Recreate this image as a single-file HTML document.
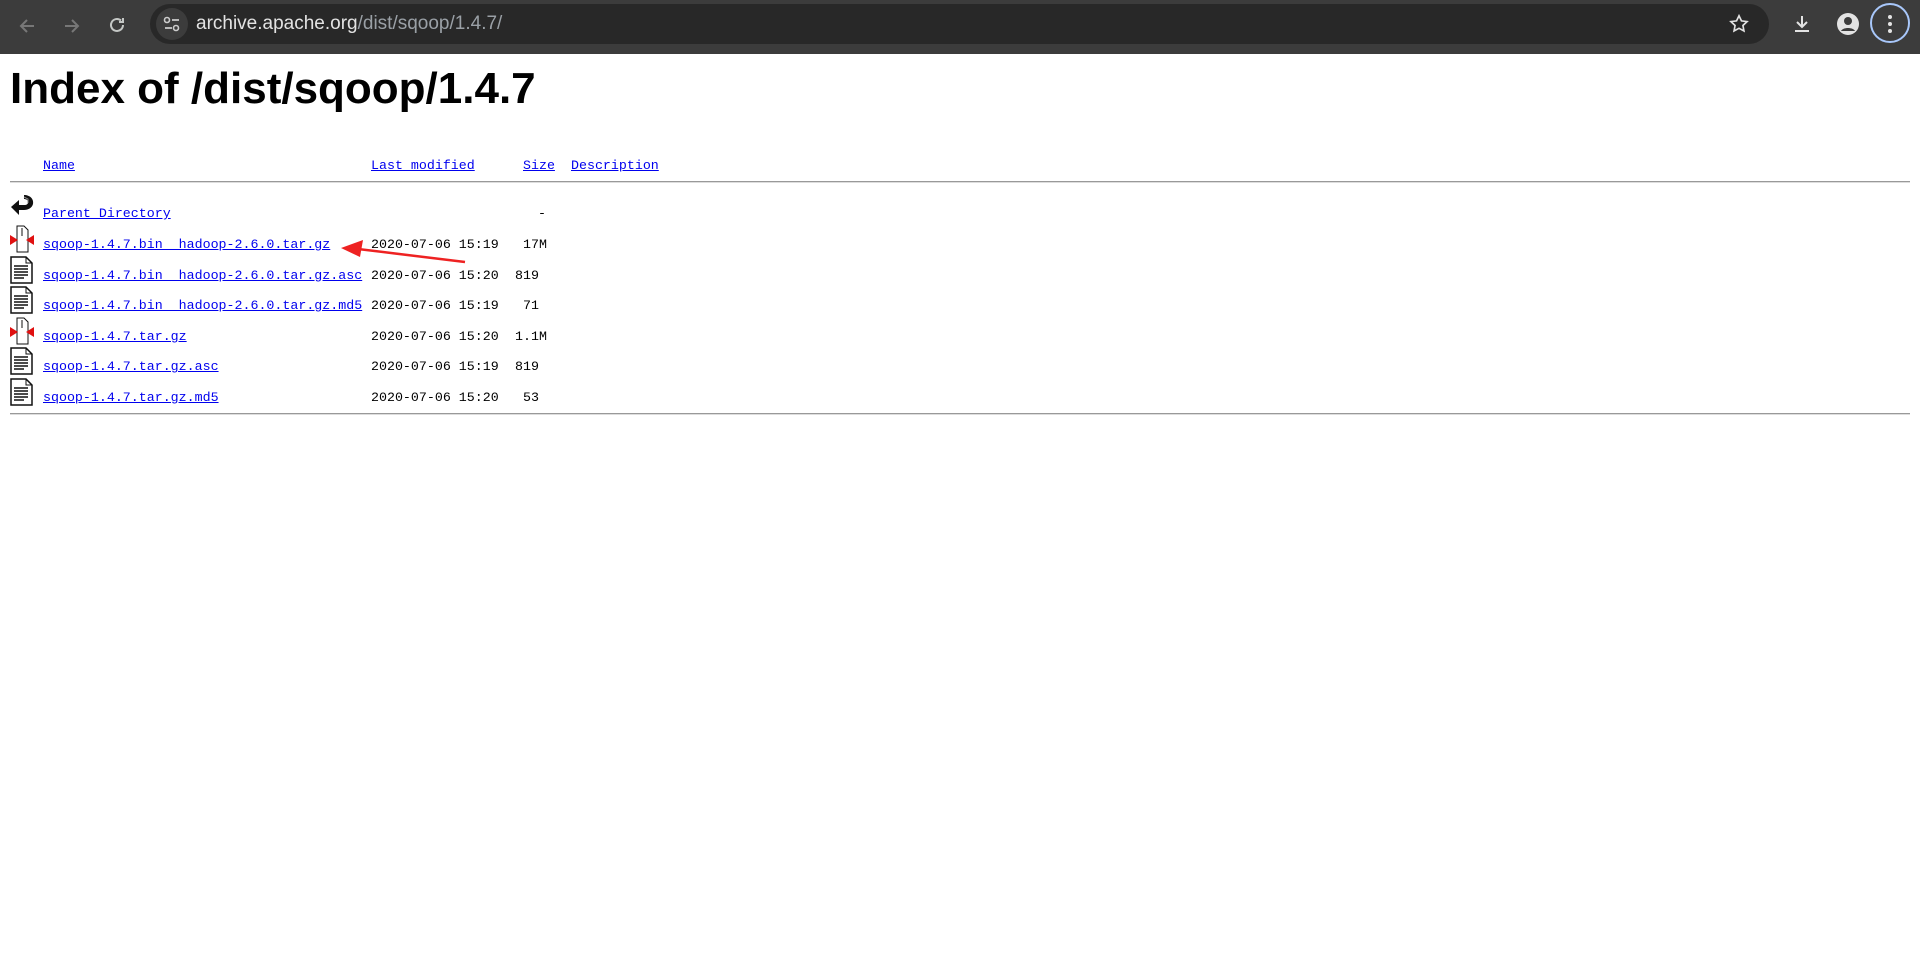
<!DOCTYPE html>
<html><head><meta charset="utf-8"><style>
body{margin:0;width:1920px;height:965px;background:#fff;overflow:hidden;font-family:"Liberation Sans",sans-serif;position:relative}
.bar{position:absolute;left:0;top:0;width:1920px;height:54px;background:#3c3c3c}
.url{position:absolute;left:150px;top:4px;width:1619px;height:40px;border-radius:20px;background:#282828}
.url .u{position:absolute;left:46px;top:9px;color:#e3e3e3;font-size:19px;white-space:pre}
.url .d{color:#9aa0a6}
.ic{position:absolute;color:#c4c7c5}
h1{position:absolute;left:10px;top:64px;margin:0;font-size:44px;font-weight:bold;letter-spacing:0px}
.t{position:absolute;font-family:"Liberation Mono",monospace;font-size:13.3px;color:#000;white-space:pre}
a{color:#0000ee;text-decoration:underline}
.hr{position:absolute;left:10px;width:1900px;height:1px;background:#999;border-bottom:1px solid #ddd}
</style></head><body>
<div class="bar">
<svg class="ic" style="left:16px;top:15px" width="22" height="22" viewBox="0 0 22 22"><path d="M18 11H5M11 5l-6 6 6 6" stroke="#777" stroke-width="2" fill="none"/></svg>
<svg class="ic" style="left:61px;top:15px" width="22" height="22" viewBox="0 0 22 22"><path d="M4 11h13M11 5l6 6-6 6" stroke="#777" stroke-width="2" fill="none"/></svg>
<svg class="ic" style="left:106px;top:14px" width="22" height="22" viewBox="0 0 22 22"><path d="M17 11a6 6 0 1 1-2-4.5M17 4v4h-4" stroke="#c4c7c5" stroke-width="2" fill="none"/></svg>
<div class="url"><div style="position:absolute;left:6px;top:4px;width:32px;height:32px;border-radius:16px;background:#3c3c3c"></div>
<svg style="position:absolute;left:13px;top:12px" width="18" height="16" viewBox="0 0 18 16"><circle cx="4" cy="4" r="2.5" stroke="#ccc" stroke-width="1.6" fill="none"/><path d="M9 4h7M2 12h7" stroke="#ccc" stroke-width="1.8"/><circle cx="13" cy="12" r="2.5" stroke="#ccc" stroke-width="1.6" fill="none"/></svg>
<div class="u">archive.apache.org<span class="d">/dist/sqoop/1.4.7/</span></div>
<svg style="position:absolute;left:1578px;top:9px" width="22" height="22" viewBox="0 0 24 24"><path d="M12 3l2.7 5.6 6.1.8-4.5 4.2 1.1 6L12 16.7 6.6 19.6l1.1-6L3.2 9.4l6.1-.8z" stroke="#e3e3e3" stroke-width="1.8" fill="none"/></svg></div>
<svg class="ic" style="left:1791px;top:13px" width="22" height="22" viewBox="0 0 22 22"><path d="M11 3v11M6 9l5 5 5-5M4 18h14" stroke="#e3e3e3" stroke-width="2" fill="none"/></svg>
<svg class="ic" style="left:1836px;top:12px" width="24" height="24" viewBox="0 0 24 24"><circle cx="12" cy="12" r="11" fill="#e3e3e3"/><circle cx="12" cy="9" r="4" fill="#3c3c3c"/><path d="M5 19c2-4 12-4 14 0" fill="#3c3c3c"/></svg>
<div style="position:absolute;left:1870px;top:3px;width:40px;height:40px;border-radius:22px;border:2px solid #a8c7fa;box-sizing:border-box"></div>
<svg class="ic" style="left:1886px;top:13px" width="8" height="22" viewBox="0 0 8 22"><circle cx="4" cy="4" r="2" fill="#e3e3e3"/><circle cx="4" cy="11" r="2" fill="#e3e3e3"/><circle cx="4" cy="18" r="2" fill="#e3e3e3"/></svg>
</div>
<h1>Index of /dist/sqoop/1.4.7</h1>
<div class="t" style="left:43px;top:158px"><a>Name</a></div>
<div class="t" style="left:371px;top:158px"><a>Last modified</a></div>
<div class="t" style="left:523px;top:158px"><a>Size</a></div>
<div class="t" style="left:571px;top:158px"><a>Description</a></div>
<div class="hr" style="top:181px"></div>
<svg style="position:absolute;left:10px;top:193px" width="26" height="26" viewBox="0 0 26 26"><path d="M14 2c6 0 10 4 9 9-1 4-5 6-9 6H9v5L1 14l8-7v5h5c3 0 4-1 4-3s-2-3-4-3z" fill="#111"/><path d="M14 4l4 2v4" stroke="#888" fill="none"/></svg>
<div class="t" style="left:43px;top:206px"><a>Parent Directory</a></div><div class="t" style="left:538px;top:206px">-</div>
<div id="rows"></div>
<svg style="position:absolute;left:0;top:0" width="1920" height="965"><path d="M465 262 L358 249" stroke="#ee2222" stroke-width="2.5"/><path d="M341 248 L363 240 L360 257z" fill="#ee2222"/></svg>
<div class="hr" style="top:413px"></div>
<script>
var r=[["sqoop-1.4.7.bin__hadoop-2.6.0.tar.gz","15:19"," 17M",1],["sqoop-1.4.7.bin__hadoop-2.6.0.tar.gz.asc","15:20","819",0],["sqoop-1.4.7.bin__hadoop-2.6.0.tar.gz.md5","15:19"," 71",0],["sqoop-1.4.7.tar.gz","15:20","1.1M",1],["sqoop-1.4.7.tar.gz.asc","15:19","819",0],["sqoop-1.4.7.tar.gz.md5","15:20"," 53",0]];
var h="";
r.forEach(function(x,i){var y=237+i*30.6;
var ic=x[3]?'<svg style="position:absolute;left:10px;top:'+(y-12)+'px" width="24" height="28" viewBox="0 0 24 28"><path d="M7 1h7l4 4v22H7z" fill="#fff" stroke="#111"/><path d="M0 10l8 5-8 5zM24 10l-8 5 8 5z" fill="#e01010"/><path d="M12 3v8" stroke="#111"/></svg>':'<svg style="position:absolute;left:10px;top:'+(y-12)+'px" width="24" height="28" viewBox="0 0 24 28"><path d="M1 1h15l6 6v20H1z" fill="#fff" stroke="#111" stroke-width="1.5"/><path d="M16 1v6h6" fill="none" stroke="#111"/><path d="M4 10h14M4 13h14M4 16h14M4 19h14M4 22h10" stroke="#111" stroke-width="1.5"/></svg>';
h+=ic+'<div class="t" style="left:43px;top:'+y+'px"><a>'+x[0]+'</a></div><div class="t" style="left:371px;top:'+y+'px">2020-07-06 '+x[1]+'</div><div class="t" style="left:515px;top:'+y+'px">'+x[2]+'</div>';});
document.getElementById("rows").innerHTML=h;
</script>
</body></html>
